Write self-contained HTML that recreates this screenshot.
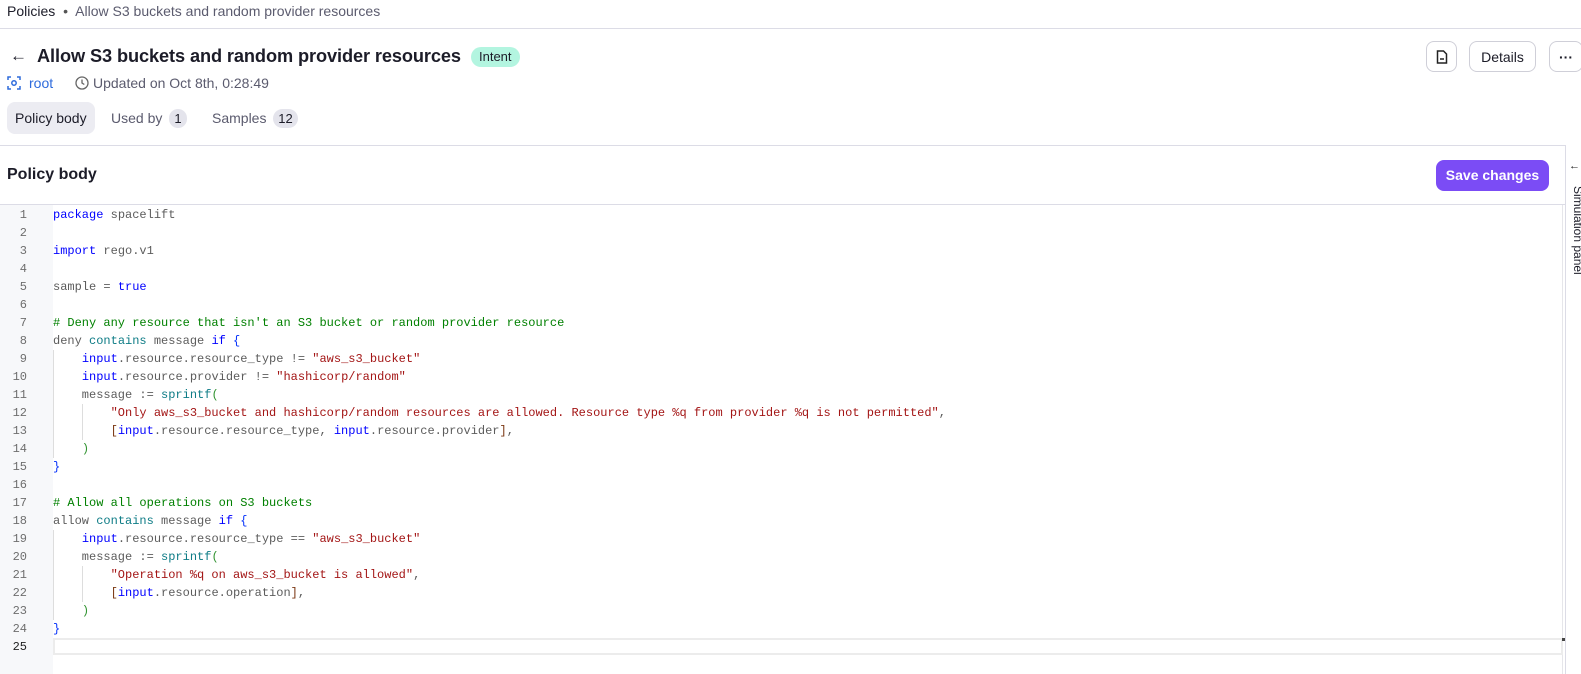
<!DOCTYPE html><html><head><meta charset="utf-8"><style>
*{box-sizing:border-box;margin:0;padding:0}
body{width:1581px;height:674px;overflow:hidden;background:#fff;font-family:"Liberation Sans",sans-serif;color:#1c1c28;position:relative}
.a{position:absolute;white-space:nowrap}
.btn{position:absolute;border:1px solid #cfcfd8;border-radius:8px;background:#fff;display:flex;align-items:center;justify-content:center;font-size:14px}
.code{position:absolute;left:53px;top:206px;font-family:"Liberation Mono",monospace;font-size:12px;line-height:18px;color:#5c5c5c;white-space:pre}
.ln{position:absolute;left:0;top:206px;width:27px;font-family:"Liberation Mono",monospace;font-size:12px;line-height:18px;color:#6e6e6e;text-align:right;white-space:pre}
.k{color:#0000ff}.s{color:#a31515}.c{color:#008000}.t{color:#0e7c86}.p{color:#319331}.b{color:#0431fa}.r{color:#7b3814}
</style></head><body>
<div class="a" style="left:7px;top:3px;font-size:14px;color:#1c1c28">Policies <span style="color:#555;margin:0 4px">•</span> <span style="color:#5b5b6e">Allow S3 buckets and random provider resources</span></div>
<div class="a" style="left:0;top:28px;width:1581px;height:1px;background:#dcdce6"></div>
<div class="a" style="left:10px;top:46px;font-size:17px">←</div>
<div class="a" style="left:37px;top:46px;font-size:18.2px;font-weight:bold;letter-spacing:-0.1px">Allow S3 buckets and random provider resources</div>
<div class="a" style="left:471px;top:47px;height:20px;padding:0 8px;border-radius:10px;background:#b3f5e0;font-size:13px;line-height:20px">Intent</div>
<svg class="a" style="left:7px;top:76px" width="14" height="14" viewBox="0 0 14 14" fill="none" stroke="#2e6bdc" stroke-width="1.5"><path d="M1 4V1h3M10 1h3v3M13 10v3h-3M4 13H1v-3"/><circle cx="7" cy="7" r="2.2"/></svg>
<div class="a" style="left:29px;top:75px;font-size:14px;color:#2e6bdc">root</div>
<svg class="a" style="left:75px;top:76px" width="14" height="14" viewBox="0 0 14 14" fill="none" stroke="#666" stroke-width="1.3"><circle cx="7" cy="7" r="6"/><path d="M7 3.5V7l2.3 1.5"/></svg>
<div class="a" style="left:93px;top:75px;font-size:14px;color:#5b5b6e">Updated on Oct 8th, 0:28:49</div>
<div class="a" style="left:7px;top:102px;width:88px;height:32px;background:#ececf2;border-radius:8px"></div>
<div class="a" style="left:15px;top:110px;font-size:14px">Policy body</div>
<div class="a" style="left:111px;top:110px;font-size:14px;color:#5b5b6e">Used by</div>
<div class="a" style="left:169px;top:109px;width:18px;height:19px;border-radius:10px;background:#e4e4ec;font-size:13px;text-align:center;line-height:19px">1</div>
<div class="a" style="left:212px;top:110px;font-size:14px;color:#5b5b6e">Samples</div>
<div class="a" style="left:273px;top:109px;width:25px;height:19px;border-radius:10px;background:#e4e4ec;font-size:13px;text-align:center;line-height:19px">12</div>
<div class="btn" style="left:1426px;top:41px;width:31px;height:31px"><svg width="12" height="14" viewBox="0 0 12 14" fill="none" stroke="#222" stroke-width="1.5"><path d="M1.5 1h6l3 3v9h-9z"/><path d="M4 9h4"/></svg></div>
<div class="btn" style="left:1469px;top:41px;width:67px;height:31px">Details</div>
<div class="btn" style="left:1549px;top:41px;width:34px;height:31px;font-weight:bold">···</div>
<div class="a" style="left:0;top:145px;width:1565px;height:1px;background:#dcdce6"></div>
<div class="a" style="left:1565px;top:145px;width:1px;height:529px;background:#dcdce6"></div>
<div class="a" style="left:1569px;top:160px;font-size:11px;color:#222;font-weight:bold">←</div>
<div class="a" style="left:1585px;top:186px;font-size:12px;line-height:14px;transform-origin:0 0;transform:rotate(90deg)">Simulation panel</div>
<div class="a" style="left:7px;top:166px;font-size:16px;font-weight:bold">Policy body</div>
<div class="a" style="left:1436px;top:160px;width:113px;height:31px;border-radius:8px;background:#7b4cf5;color:#fff;font-size:14px;font-weight:bold;text-align:center;line-height:31px">Save changes</div>
<div class="a" style="left:0;top:204px;width:1565px;height:1px;background:#dcdce6"></div>
<div class="a" style="left:0;top:205px;width:53px;height:469px;background:#f7f8fa"></div>
<div class="a" style="left:1562px;top:205px;width:1px;height:469px;background:#e6e6ea"></div>
<div class="a" style="left:53px;top:638px;width:1510px;height:17px;border:2px solid #ececec"></div>
<div class="a" style="left:1562px;top:638px;width:3px;height:3px;background:#444"></div>
<div class="a" style="left:53px;top:350px;width:1px;height:108px;background:#ddd"></div>
<div class="a" style="left:82px;top:404px;width:1px;height:36px;background:#ddd"></div>
<div class="a" style="left:53px;top:530px;width:1px;height:90px;background:#ddd"></div>
<div class="a" style="left:82px;top:566px;width:1px;height:36px;background:#ddd"></div>
<div class="ln">1
2
3
4
5
6
7
8
9
10
11
12
13
14
15
16
17
18
19
20
21
22
23
24
<span style="color:#222">25</span></div>
<div class="code"><span class="k">package</span> spacelift

<span class="k">import</span> rego.v1

sample = <span class="k">true</span>

<span class="c"># Deny any resource that isn't an S3 bucket or random provider resource</span>
deny <span class="t">contains</span> message <span class="k">if</span> <span class="b">{</span>
    <span class="k">input</span>.resource.resource_type != <span class="s">"aws_s3_bucket"</span>
    <span class="k">input</span>.resource.provider != <span class="s">"hashicorp/random"</span>
    message := <span class="t">sprintf</span><span class="p">(</span>
        <span class="s">"Only aws_s3_bucket and hashicorp/random resources are allowed. Resource type %q from provider %q is not permitted"</span>,
        <span class="r">[</span><span class="k">input</span>.resource.resource_type, <span class="k">input</span>.resource.provider<span class="r">]</span>,
    <span class="p">)</span>
<span class="b">}</span>

<span class="c"># Allow all operations on S3 buckets</span>
allow <span class="t">contains</span> message <span class="k">if</span> <span class="b">{</span>
    <span class="k">input</span>.resource.resource_type == <span class="s">"aws_s3_bucket"</span>
    message := <span class="t">sprintf</span><span class="p">(</span>
        <span class="s">"Operation %q on aws_s3_bucket is allowed"</span>,
        <span class="r">[</span><span class="k">input</span>.resource.operation<span class="r">]</span>,
    <span class="p">)</span>
<span class="b">}</span>
</div>
</body></html>
